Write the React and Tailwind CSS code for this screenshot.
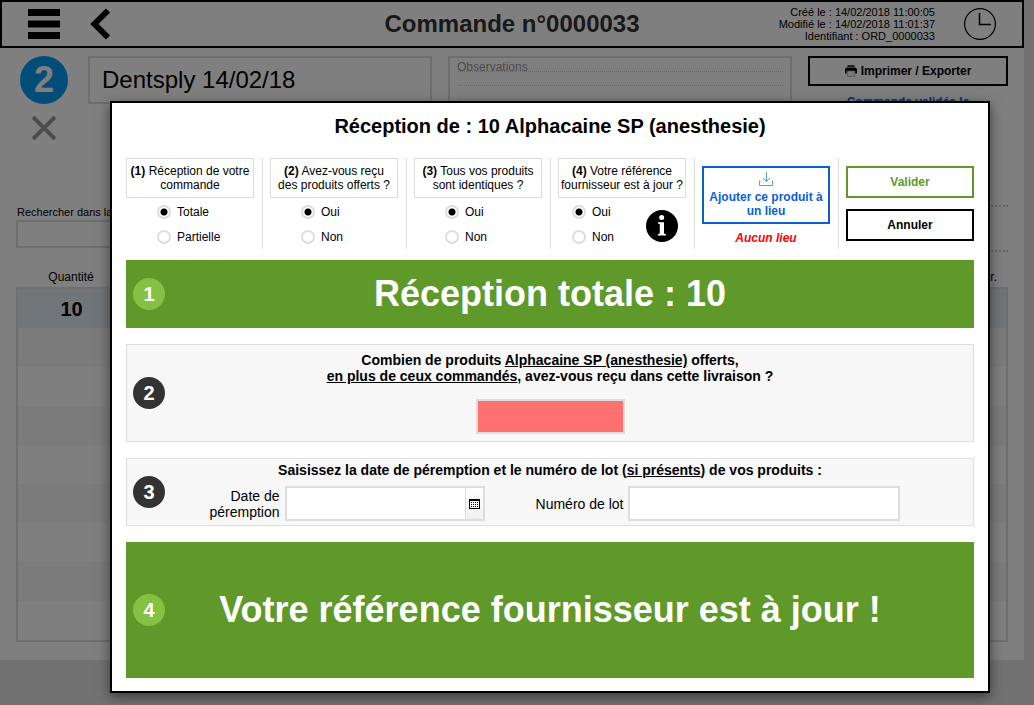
import { useState } from "react";

const emptyRows = [1, 2, 3, 4, 5, 6, 7, 8];

function Header() {
  return (
    <header className="grid h-12 grid-cols-[1fr_auto_1fr] items-center border-2 border-black bg-white pr-[26px] pl-[26px]">
      <div className="flex items-center gap-[30px]">
        <button type="button" aria-label="Menu">
          <svg width="32" height="30" viewBox="0 0 32 30" className="block">
            <path d="M0 0h32v7H0zM0 11.5h32v7H0zM0 23h32v7H0z" />
          </svg>
        </button>
        <button type="button" aria-label="Retour">
          <svg width="22" height="32" viewBox="0 0 22 32" className="block">
            <path d="M18 2.5L4.500 16L18 29.500" fill="none" stroke="#000" strokeWidth="6" />
          </svg>
        </button>
      </div>
      <h1 className="text-2xl leading-8 font-bold text-[#333]">Commande n°0000033</h1>
      <div className="flex items-center justify-end gap-[29px]">
        <p className="text-right text-[11px] leading-3">
          Créé le : 14/02/2018 11:00:05
          <br />
          Modifié le : 14/02/2018 11:01:37
          <br />
          Identifiant : ORD_0000033
        </p>
        <svg width="32" height="32" viewBox="0 0 32 32" fill="none" stroke="#000">
          <circle cx="16" cy="16" r="15.400" strokeWidth="1.200" />
          <path d="M15.500 5v11.500H27" strokeWidth="1.500" />
        </svg>
      </div>
    </header>
  );
}

function OrderPage() {
  return (
    <div className="mr-2.5 bg-white pb-[18px]">
      <Header />
      <div className="grid grid-cols-[52px_1fr_1fr_200px] gap-4 pt-2 pr-4 pl-5">
        <div className="flex w-12 flex-col items-center gap-3">
          <div className="flex size-12 items-center justify-center rounded-full bg-[#009bf5] text-[36px] leading-none font-bold text-white">
            2
          </div>
          <button type="button" aria-label="Supprimer">
            <svg width="24" height="24" viewBox="0 0 24 24" className="block">
              <path d="M1 1L23 23M23 1L1 23" stroke="#999" strokeWidth="4" />
            </svg>
          </button>
        </div>
        <input
          aria-label="Nom de la commande"
          defaultValue="Dentsply 14/02/18"
          className="h-12 w-full border-2 border-[#ddd] px-3 text-2xl"
        />
        <textarea
          aria-label="Observations"
          placeholder="Observations"
          className="h-20 w-full resize-none border-2 border-[#ddd] bg-[repeating-linear-gradient(90deg,#fff_0_1px,transparent_1px_2px),linear-gradient(#fff_11px,#ccc_11px_12px,#fff_12px)] bg-[length:100%_14px] bg-clip-content bg-origin-content px-[7px] py-0.5 text-xs leading-[14px] placeholder:text-[#999]"
        />
        <div>
          <button
            type="button"
            className="flex h-[30px] w-full items-center justify-center gap-1 border-2 border-black text-xs font-bold"
          >
            <svg width="12" height="12" viewBox="0 0 12 12">
              <path d="M2.500 .3h7v1.400h-7zM1.500 2.500h9L12 4v4.500h-1.800V6H1.800v2.500H0V4z" />
              <path d="M2.300 6h7.400v5.400H2.300z" fill="#f2f2f2" stroke="#999" strokeWidth=".7" />
            </svg>
            Imprimer / Exporter
          </button>
          <p className="mt-2 text-center text-xs leading-4 font-bold text-[#0a5fd6]">Commande validée le</p>
        </div>
      </div>

      <div className="mt-[65px] flex px-4">
        <div className="w-[300px] text-[11px]">
          <label htmlFor="search" className="block px-px leading-[15px]">
            Rechercher dans la
          </label>
          <input id="search" className="block h-7 w-full border-2 border-[#ddd]" />
        </div>
        <div className="h-[47px] flex-1 border-y-2 border-dotted border-[#ccc]" />
      </div>

      <div className="mt-3 px-4">
        <table className="w-full border-collapse">
          <thead className="text-xs">
            <tr className="h-6">
              <th className="w-[108px] pt-0.5 font-normal">Quantité</th>
              <th className="pt-0.5 pr-2.5 text-right font-normal">r.</th>
            </tr>
          </thead>
          <tbody className="border-2 border-[#ddd]">
            <tr className="h-10 bg-[#e0ebf3]">
              <td className="text-center text-xl font-bold">10</td>
              <td />
            </tr>
            {emptyRows.map((n) => (
              <tr key={n} className="h-[39px] last:h-10 odd:bg-white even:bg-[#f7f7f7]">
                <td />
                <td />
              </tr>
            ))}
          </tbody>
        </table>
      </div>
    </div>
  );
}

function Question({ number, text, name, options, info }) {
  const [value, setValue] = useState(options[0]);
  return (
    <fieldset className="-mr-[9px] border-r border-[#ddd] pr-2">
      <div className="flex h-10 items-center justify-center border border-[#ddd] text-center text-xs leading-[14px]">
        <p className="-mx-1">
          <b>({number})</b> {text[0]}
          <br />
          {text[1]}
        </p>
      </div>
      <div className={info ? "flex justify-between pr-2 pl-3.5" : "pl-[31px]"}>
        <div className="flex flex-col gap-[11px] pt-[7px]">
          {options.map((option) => (
            <label key={option} className="flex items-center gap-1.5 text-xs leading-[14px]">
              <input
                type="radio"
                name={name}
                checked={value === option}
                onChange={() => setValue(option)}
                className="size-3.5 appearance-none rounded-full border-2 border-[#ddd] bg-white checked:bg-[radial-gradient(#000_3px,transparent_4px)]"
              />
              {option}
            </label>
          ))}
        </div>
        {info && (
          <button type="button" aria-label="Information" className="mt-3 self-start">
            <svg width="32" height="32" viewBox="0 0 32 32" className="block">
              <circle cx="16" cy="16" r="16" />
              <circle cx="15.700" cy="7.600" r="2.500" fill="#fff" />
              <path d="M12 12.200h6v11.300l2 .7v1.300h-8.200v-1.300l2-.7v-9.300l-1.800-.7z" fill="#fff" />
            </svg>
          </button>
        )}
      </div>
    </fieldset>
  );
}

function Step({ number, tone, className, children }) {
  const green = tone === "green";
  return (
    <section
      className={`grid grid-cols-[32px_1fr_32px] items-center px-1.5 border ${
        green ? "border-[#5f992a] bg-[#5f992a] text-white" : "border-[#ddd] bg-[#f7f7f7]"
      } ${className}`}
    >
      <span
        className={`flex size-8 items-center justify-center rounded-full text-xl leading-none font-bold text-white ${
          green ? "bg-[#84c144]" : "bg-[#333]"
        }`}
      >
        {number}
      </span>
      {children}
    </section>
  );
}

function ReceptionDialog() {
  return (
    <div
      role="dialog"
      aria-labelledby="dialog-title"
      className="absolute top-[101px] right-11 left-[110px] border-2 border-black bg-white px-3.5 pb-[13px] shadow-[0_4px_12px_rgba(0,0,0,0.5)]"
    >
      <h2 id="dialog-title" className="pt-[7px] pb-4 text-center text-xl leading-8 font-bold">
        Réception de : 10 Alphacaine SP (anesthesie)
      </h2>
      <div className="grid h-[91px] grid-cols-6 gap-4">
        <Question number={1} name="reception" text={["Réception de votre", "commande"]} options={["Totale", "Partielle"]} />
        <Question number={2} name="offerts" text={["Avez-vous reçu", "des produits offerts ?"]} options={["Oui", "Non"]} />
        <Question number={3} name="identiques" text={["Tous vos produits", "sont identiques ?"]} options={["Oui", "Non"]} />
        <Question number={4} name="reference" text={["Votre référence", "fournisseur est à jour ?"]} options={["Oui", "Non"]} info />
        <div className="-mr-[9px] border-r border-[#ddd] pt-2 pr-2 text-center text-xs leading-[14px] font-bold">
          <button
            type="button"
            className="flex h-[58px] w-full flex-col items-center justify-center gap-1 border-2 border-[#0a5fd6] text-[#0a5fd6]"
          >
            <svg width="14" height="14" viewBox="0 0 14 14" fill="none" stroke="#5c9be8">
              <path d="M.5 8.500v5h13v-5M7.500 0v9M4 6l3.500 3.500L11 6" />
            </svg>
            Ajouter ce produit à un lieu
          </button>
          <p className="mt-[7px] text-[#f00] italic">Aucun lieu</p>
        </div>
        <div className="flex flex-col gap-[11px] pt-2 text-xs font-bold">
          <button type="button" className="h-8 border-2 border-[#5f992a] text-[#5f992a]">
            Valider
          </button>
          <button type="button" className="h-8 border-2 border-black">
            Annuler
          </button>
        </div>
      </div>

      <div className="mt-[11px] flex flex-col gap-4">
        <Step number={1} tone="green" className="h-[68px]">
          <p className="text-center text-[36px] leading-10 font-bold">Réception totale : 10</p>
        </Step>
        <Step number={2} className="py-[7px]">
          <div className="flex flex-col items-center gap-[15px] text-center text-sm leading-4 font-bold">
            <label htmlFor="offered">
              Combien de produits <u>Alphacaine SP (anesthesie)</u> offerts,
              <br />
              <u>en plus de ceux commandés</u>, avez-vous reçu dans cette livraison ?
            </label>
            <input id="offered" className="h-[35px] w-[149px] border-2 border-[#ddd] bg-[#ff7070] px-2 text-center" />
          </div>
        </Step>
        <Step number={3} className="pt-[3px] pb-1">
          <div className="text-sm leading-4">
            <p className="text-center font-bold">
              Saisissez la date de péremption et le numéro de lot (<u>si présents</u>) de vos produits :
            </p>
            <div className="mt-2 flex items-center justify-center gap-[5px]">
              <label htmlFor="expiry" className="w-20 text-right">
                Date de péremption
              </label>
              <div className="mr-[46px] flex h-[35px] w-[200px] border-2 border-[#ddd] bg-white">
                <input id="expiry" className="min-w-0 flex-1 px-2" />
                <button
                  type="button"
                  aria-label="Calendrier"
                  className="flex w-[18px] items-center justify-center border-l border-[#ddd] bg-linear-to-b from-white to-[#f0f0f0]"
                >
                  <svg width="11" height="10" viewBox="0 0 11 10" shapeRendering="crispEdges">
                    <path d="M0 0h11v10H0z" />
                    <path d="M1 2h9v7H1z" fill="#fff" />
                    <path d="M2 3.500h7M2 5.500h7M2 7.500h7" stroke="#000" strokeDasharray="1 1" />
                  </svg>
                </button>
              </div>
              <label htmlFor="lot">Numéro de lot</label>
              <input id="lot" className="h-[35px] w-[272px] border-2 border-[#ddd] bg-white px-2" />
            </div>
          </div>
        </Step>
        <Step number={4} tone="green" className="h-[136px]">
          <p className="text-center text-[36px] leading-10 font-bold">Votre référence fournisseur est à jour !</p>
        </Step>
      </div>
    </div>
  );
}

export default function App() {
  return (
    <div className="relative min-h-screen bg-[#e4e4e4] font-['Liberation_Sans',Arial,sans-serif] text-black">
      <OrderPage />
      <div className="absolute inset-0 bg-black/50" />
      <ReceptionDialog />
    </div>
  );
}
